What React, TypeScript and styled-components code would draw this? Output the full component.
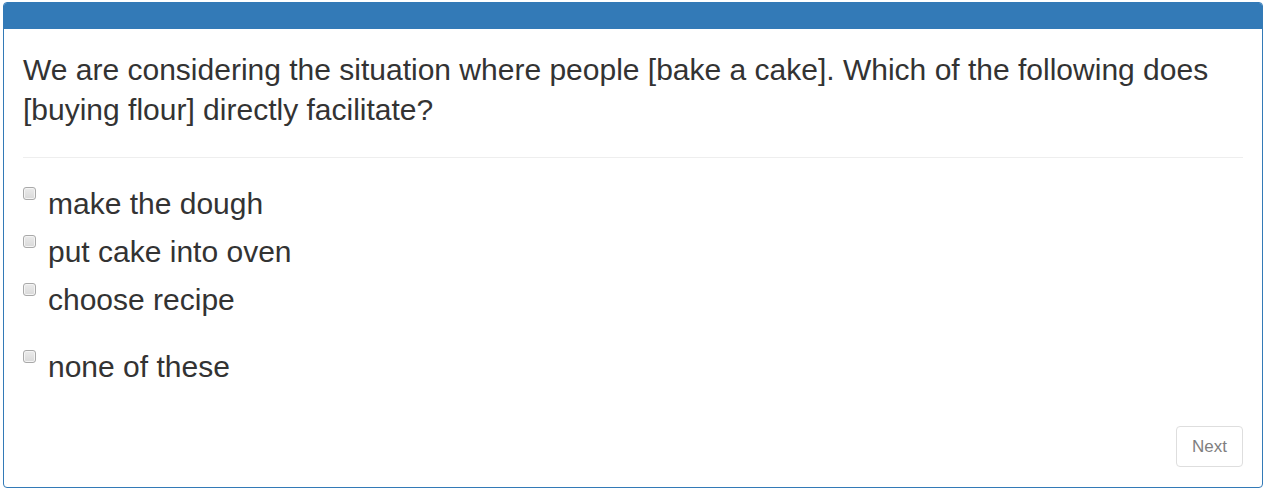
import React from 'react'
import styled, { createGlobalStyle } from 'styled-components'

const GlobalStyle = createGlobalStyle`
    html, body {
        margin: 0;
        padding: 0;
        background: #ffffff;
    }
    body {
        font-family: "Liberation Sans", Arial, Helvetica, sans-serif;
        color: #333333;
    }
`

const Page = styled.div`
    padding: 2px 2px 0 3px;
`

const Panel = styled.div`
    display: flex;
    flex-direction: column;
    width: 1260px;
    box-sizing: border-box;
    border: 1px solid #337ab7;
    border-radius: 4px;
    overflow: hidden;
    background: #ffffff;
`

const Heading = styled.div`
    height: 26px;
    background: #337ab7;
`

const Body = styled.div`
    display: flex;
    flex-direction: column;
    padding: 0 19px 20px 19px;
`

const Question = styled.p`
    margin: 21px 0 0 0;
    font-size: 30px;
    line-height: 40px;
`

const Divider = styled.hr`
    margin: 27px 0 26px 0;
    border: 0;
    border-top: 1px solid #eeeeee;
    height: 0;
`

const Options = styled.div`
    display: flex;
    flex-direction: column;
`

const Option = styled.label<{ $spaced?: boolean }>`
    display: flex;
    align-items: flex-start;
    gap: 12px;
    margin-top: ${(p) => (p.$spaced ? '19px' : '0')};
    margin-bottom: 8px;
    font-size: 30px;
    line-height: 40px;
    cursor: pointer;
`

const Box = styled.span`
    flex: 0 0 auto;
    width: 11px;
    height: 11px;
    margin-top: 3px;
    border: 1px solid #a9a9a9;
    border-radius: 3px;
    background: linear-gradient(#ebebeb, #d9d9d9);
    box-shadow: inset 0 0 0 1px #f4f4f4;
`

const Footer = styled.div`
    display: flex;
    justify-content: flex-end;
    margin-top: 31px;
`

const NextButton = styled.button`
    font-family: "Liberation Sans", Arial, Helvetica, sans-serif;
    font-size: 17px;
    line-height: 23px;
    padding: 8px 15px;
    color: #7f7f7f;
    background: #ffffff;
    border: 1px solid #dedede;
    border-radius: 4px;
    cursor: not-allowed;
`

const options = ['make the dough', 'put cake into oven', 'choose recipe']

export default function App() {
    return (
        <>
            <GlobalStyle />
            <Page>
                <Panel>
                    <Heading />
                    <Body>
                        <Question>
                            We are considering the situation where people [bake a cake]. Which of the
                            following does [buying flour] directly facilitate?
                        </Question>
                        <Divider />
                        <Options>
                            {options.map((o) => (
                                <Option key={o}>
                                    <Box />
                                    <span>{o}</span>
                                </Option>
                            ))}
                            <Option $spaced>
                                <Box />
                                <span>none of these</span>
                            </Option>
                        </Options>
                        <Footer>
                            <NextButton disabled>Next</NextButton>
                        </Footer>
                    </Body>
                </Panel>
            </Page>
        </>
    )
}
